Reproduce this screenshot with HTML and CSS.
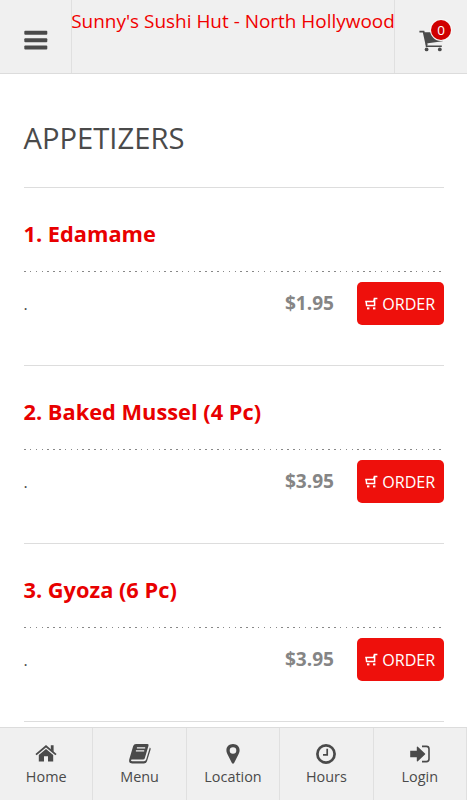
FILE: index.html
```
<!DOCTYPE html>
<html lang="en">
<head>
  <meta charset="UTF-8" />
  <title>Sunny's Sushi Hut - North Hollywood</title>
  <meta name="viewport" content="width=device-width, initial-scale=1.0" />
  <link rel="stylesheet" href="styles.css">
</head>
<body>

  <svg class="sprite">
    <symbol id="cart" viewBox="0 0 13 13">
      <path d="M0.2 4.6H8.6L9.4 1.6H12.4M9.6 1.8V8.6H1.6L1.2 4.6" fill="none" stroke="currentColor" stroke-width="1.5" />
      <rect x="2" y="10.4" width="2.4" height="2" fill="currentColor" />
      <rect x="8" y="10.4" width="2.4" height="2" fill="currentColor" />
    </symbol>
  </svg>

  <header class="top-bar">
    <a class="menu-btn" href="#">
      <svg width="24" height="20" viewBox="0 0 24 20">
        <rect x="0.3" y="0.8" width="23" height="4" rx="1" />
        <rect x="0.3" y="8.2" width="23" height="4" rx="1" />
        <rect x="0.3" y="15.6" width="23" height="4" rx="1" />
      </svg>
    </a>
    <div class="brand">Sunny's Sushi Hut - North Hollywood</div>
    <a class="cart-btn" href="#">
      <svg width="26" height="22" viewBox="0 0 26 22">
        <path d="M0.4 1.7H4.6L7.6 15.2" fill="none" stroke="#4a4a4a" stroke-width="1.8" />
        <path d="M5 2.2H24.5L23.6 11.3L7.2 13.6Z" />
        <path d="M7.5 13V16.2H22.8" fill="none" stroke="#4a4a4a" stroke-width="1.5" />
        <circle cx="7.6" cy="19.4" r="1.9" />
        <circle cx="20.8" cy="19.4" r="1.9" />
      </svg>
      <span class="badge">0</span>
    </a>
  </header>

  <main class="content">
    <h1>APPETIZERS</h1>

    <section class="item">
      <h2>1. Edamame</h2>
      <div class="row">
        <p>.</p>
        <span class="price">$1.95</span>
        <button class="order-btn"><svg width="13" height="13"><use href="#cart" /></svg>ORDER</button>
      </div>
    </section>

    <section class="item">
      <h2>2. Baked Mussel (4 Pc)</h2>
      <div class="row">
        <p>.</p>
        <span class="price">$3.95</span>
        <button class="order-btn"><svg width="13" height="13"><use href="#cart" /></svg>ORDER</button>
      </div>
    </section>

    <section class="item">
      <h2>3. Gyoza (6 Pc)</h2>
      <div class="row">
        <p>.</p>
        <span class="price">$3.95</span>
        <button class="order-btn"><svg width="13" height="13"><use href="#cart" /></svg>ORDER</button>
      </div>
    </section>

    <div class="end-line"></div>
  </main>

  <nav class="bottom-bar">
    <a href="#">
      <svg width="24" height="22" viewBox="0 0 24 22">
        <path d="M12 6L19.2 12V18.5H14V13.2H10V18.5H4.8V12Z" />
        <path d="M2 11.6L12 3.2L22 11.6" fill="none" stroke="#4a4a4a" stroke-width="1.8" />
        <path d="M16.8 2.2H19.6V9L16.8 6.6Z" />
      </svg>
      Home
    </a>
    <a href="#">
      <svg width="24" height="22" viewBox="0 0 24 22">
        <path d="M8 1H19.5Q21 1 20.5 2.7L16.8 15.2Q16.4 16.5 15 16.5H4Q2.8 16.5 3 17.5Q3.2 18.3 4.4 18.3H16Q17.6 18.3 18.2 16.6L21.8 4.6Q23 5 22.6 6.4L19 18.2Q18.2 20.4 16 20.4H4.2Q0.4 20.4 1.2 16.5L5.2 3Q5.9 1 8 1Z" />
        <path d="M8.9 4.8H17.2M7.9 7.9H16.2" fill="none" stroke="#f0f0f0" stroke-width="1.3" />
      </svg>
      Menu
    </a>
    <a href="#">
      <svg width="24" height="22" viewBox="0 0 24 22">
        <path fill-rule="evenodd" d="M12 1C8 1 5.4 3.8 5.4 7.3C5.4 9 6 10.3 6.6 11.5L10.9 20Q12 21.6 13.1 20L17.4 11.5C18 10.3 18.6 9 18.6 7.3C18.6 3.8 16 1 12 1ZM12 4.2A3.3 3.3 0 1 1 12 10.8A3.3 3.3 0 1 1 12 4.2Z" />
      </svg>
      Location
    </a>
    <a href="#">
      <svg width="24" height="22" viewBox="0 0 24 22">
        <circle cx="12" cy="11" r="8.6" fill="none" stroke="#4a4a4a" stroke-width="2.7" />
        <path d="M13.2 5.8V11.9H9" fill="none" stroke="#4a4a4a" stroke-width="1.7" />
      </svg>
      Hours
    </a>
    <a href="#">
      <svg width="24" height="22" viewBox="0 0 24 22">
        <path d="M2.2 7.8H8.8V4Q9 3.2 9.8 3.8L17 10.4Q17.6 11 17 11.6L9.8 18.2Q9 18.8 8.8 18V14.2H2.2Z" />
        <path d="M14 3.4H18.4Q21 3.4 21 6V16Q21 18.6 18.4 18.6H14" fill="none" stroke="#4a4a4a" stroke-width="1.6" />
      </svg>
      Login
    </a>
  </nav>

</body>
</html>
```
FILE: styles.css
```
body {
  font-family: "Open Sans", sans-serif;
  color: #4a4a4a;
  background: #fff;
  margin: 0;
  height: 100vh;
  display: flex;
  flex-direction: column;
  overflow: hidden;
}

* {
  box-sizing: border-box;
}

a {
  color: inherit;
  text-decoration: none;
}

svg {
  fill: #4a4a4a;
}

.sprite {
  display: none;
}

.top-bar {
  display: flex;
  flex: none;
  height: 74px;
  background: #f0f0f0;
  border-bottom: 1px solid #dcdcdc;
}

.menu-btn, .cart-btn {
  display: flex;
  flex: none;
  width: 73px;
  padding-top: 30px;
  align-items: flex-start;
}

.menu-btn {
  width: 72px;
  padding-left: 24px;
  border-right: 1px solid #e0e0e0;
}

.cart-btn {
  position: relative;
  padding-left: 24px;
  border-left: 1px solid #e0e0e0;
}

.badge {
  position: absolute;
  top: 20px;
  left: 36px;
  width: 20px;
  height: 20px;
  border-radius: 50%;
  background: #d00000;
  box-shadow: 0 0 0 1px #f8f8f8;
  color: #fff;
  font-size: 13.5px;
  line-height: 20px;
  text-align: center;
}

.brand {
  flex: 1;
  display: flex;
  justify-content: center;
  color: #f00000;
  font-size: 18.95px;
  line-height: 26px;
  padding-top: 8px;
  min-width: 0;
  white-space: nowrap;
}

.content {
  flex: 1;
  min-height: 0;
  padding: 0 23.5px;
}

h1 {
  margin: 0;
  height: 113px;
  padding-top: 44px;
  font-size: 29.2px;
  font-weight: 400;
  line-height: 40px;
}

.item {
  height: 178px;
  border-top: 1px solid #ddd;
  padding-top: 31px;
}

.item h2 {
  margin: 0;
  color: #e80000;
  font-size: 21.8px;
  font-weight: 700;
  line-height: 30px;
}

.row {
  display: flex;
  align-items: center;
  margin-top: 22px;
  padding-top: 11px;
  background: repeating-linear-gradient(to right, #888 0 1.5px, transparent 1.5px 5.85px) top left / 100% 1px no-repeat;
}

.row p {
  flex: 1;
  margin: 0;
  font-size: 16px;
}

.price {
  color: #858585;
  font-size: 19.1px;
  font-weight: 700;
  margin-right: 23px;
  padding-bottom: 2px;
}

.order-btn {
  display: flex;
  align-items: center;
  justify-content: center;
  gap: 4px;
  width: 86.5px;
  height: 43px;
  padding: 0;
  border: none;
  border-radius: 5px;
  background: #ee100c;
  color: #fff;
  font-family: inherit;
  font-size: 16.1px;
}

.end-line {
  border-top: 1px solid #ddd;
}

.bottom-bar {
  display: flex;
  flex: none;
  height: 73px;
  background: #f0f0f0;
  border-top: 1px solid #dcdcdc;
}

.bottom-bar a {
  flex: 1 1 0;
  display: flex;
  flex-direction: column;
  align-items: center;
  padding-top: 15px;
  font-size: 14.4px;
  line-height: 24px;
  border-right: 1px solid #e0e0e0;
}
```
